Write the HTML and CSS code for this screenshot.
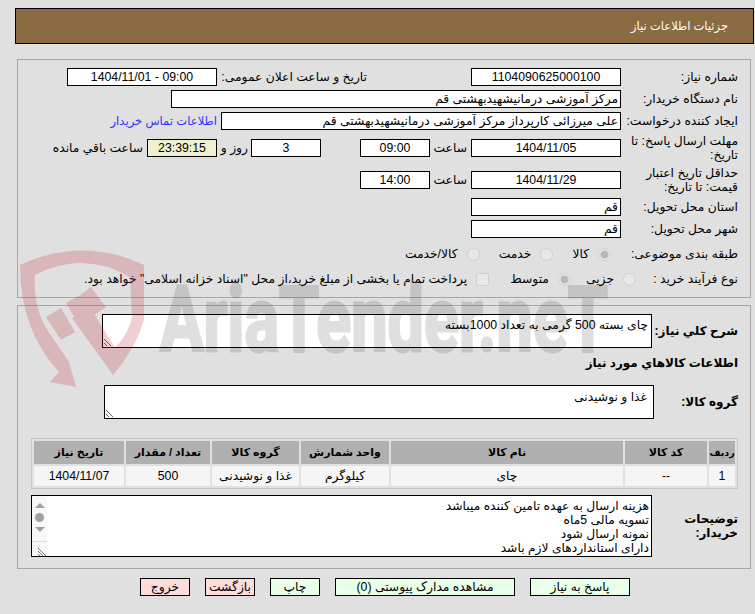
FILE: index.html
```html
<!DOCTYPE html>
<html lang="fa" dir="rtl">
<head>
    <meta charset="UTF-8">
    <meta name="viewport" content="width=device-width, initial-scale=1.0">
    <title>جزئیات اطلاعات نیاز</title>
    <link rel="stylesheet" href="styles.css">
</head>
<body>
    <!-- Page title -->
    <header class="title-bar">
        <h1 class="title-text">جزئیات اطلاعات نیاز</h1>
    </header>

    <!-- Tender details -->
    <section class="panel panel-top">
        <div class="row">
            <label class="row-label">شماره نیاز:</label>
            <input class="field field-md field-center" value="1104090625000100" readonly>
            <label class="announce-label">تاریخ و ساعت اعلان عمومی:</label>
            <input class="field field-md field-center" value="09:00 - 1404/11/01" readonly>
        </div>
        <div class="row">
            <label class="row-label">نام دستگاه خریدار:</label>
            <input class="field field-lg" value="مرکز آموزشی درمانیشهیدبهشتی قم" readonly>
        </div>
        <div class="row">
            <label class="row-label">ایجاد کننده درخواست:</label>
            <input class="field field-xl" value="علی میرزائی کارپرداز مرکز آموزشی درمانیشهیدبهشتی قم" readonly>
            <a class="contact-link" href="#">اطلاعات تماس خریدار</a>
        </div>
        <div class="row row-tall">
            <label class="row-label">مهلت ارسال پاسخ: تا تاریخ:</label>
            <input class="field field-md field-center" value="1404/11/05" readonly>
            <span class="time-label">ساعت</span>
            <input class="field field-sm field-center" value="09:00" readonly>
            <input class="field field-sm field-center days-field" value="3" readonly>
            <span class="days-label">روز و</span>
            <input class="field field-sm field-center timer-field" value="23:39:15" readonly>
            <span class="left-label">ساعت باقي مانده</span>
        </div>
        <div class="row row-tall">
            <label class="row-label">حداقل تاریخ اعتبار قیمت: تا تاریخ:</label>
            <input class="field field-md field-center" value="1404/11/29" readonly>
            <span class="time-label">ساعت</span>
            <input class="field field-sm field-center" value="14:00" readonly>
        </div>
        <div class="row">
            <label class="row-label">استان محل تحویل:</label>
            <input class="field field-md" value="قم" readonly>
        </div>
        <div class="row">
            <label class="row-label">شهر محل تحویل:</label>
            <input class="field field-md" value="قم" readonly>
        </div>
        <div class="row row-subject">
            <label class="row-label">طبقه بندی موضوعی:</label>
            <input class="radio subject-first" type="radio" name="subject" checked disabled>
            <span class="option-text subject-text">کالا</span>
            <input class="radio" type="radio" name="subject" disabled>
            <span class="option-text subject-text">خدمت</span>
            <input class="radio" type="radio" name="subject" disabled>
            <span class="option-text">کالا/خدمت</span>
        </div>
        <div class="row row-process">
            <label class="row-label">نوع فرآیند خرید :</label>
            <input class="radio process-first" type="radio" name="process" disabled>
            <span class="option-text">جزیی</span>
            <input class="radio" type="radio" name="process" checked disabled>
            <span class="option-text option-wide">متوسط</span>
            <input class="check" type="checkbox" disabled>
            <span class="option-text">پرداخت تمام یا بخشی از مبلغ خرید،از محل "اسناد خزانه اسلامی" خواهد بود.</span>
        </div>
    </section>

    <!-- Goods -->
    <section class="panel panel-bottom">
        <div class="row-desc">
            <label class="bold-label desc-label">شرح کلي نياز:</label>
            <textarea class="memo memo-desc" readonly>چای بسته 500 گرمی به تعداد 1000بسته</textarea>
        </div>
        <h2 class="bold-label goods-heading">اطلاعات كالاهاي مورد نياز</h2>
        <div class="row-desc row-group">
            <label class="bold-label group-label">گروه کالا:</label>
            <textarea class="memo memo-group" readonly>غذا و نوشیدنی</textarea>
        </div>

        <table class="goods-table">
            <thead>
                <tr>
                    <th class="col-index">ردیف</th>
                    <th class="col-code">کد کالا</th>
                    <th class="col-name">نام کالا</th>
                    <th class="col-unit">واحد شمارش</th>
                    <th class="col-group">گروه کالا</th>
                    <th class="col-count">تعداد / مقدار</th>
                    <th class="col-date">تاریخ نیاز</th>
                </tr>
            </thead>
            <tbody>
                <tr>
                    <td>1</td>
                    <td>--</td>
                    <td>چای</td>
                    <td>کیلوگرم</td>
                    <td>غذا و نوشیدنی</td>
                    <td>500</td>
                    <td>1404/11/07</td>
                </tr>
            </tbody>
        </table>

        <div class="row-notes">
            <label class="bold-label notes-label">توضیحات خریدار:</label>
            <div class="notes-box">
                <div class="notes-text">
                    هزینه ارسال به عهده تامین کننده میباشد<br>
                    تسویه مالی 5ماه<br>
                    نمونه ارسال شود<br>
                    دارای استانداردهای لازم باشد
                </div>
                <div class="notes-scroll">
                    <span class="arrow-up"></span>
                    <span class="scroll-thumb"></span>
                    <span class="arrow-down"></span>
                    <span class="scroll-grip">
                        <svg width="10" height="10" viewBox="0 0 10 10">
                            <path d="M1 1l8 8M1 4l5 5M1 7l2 2" stroke="#777" fill="none"/>
                        </svg>
                    </span>
                </div>
            </div>
        </div>
    </section>

    <!-- Actions -->
    <div class="actions">
        <button class="btn btn-green btn-reply">پاسخ به نیاز</button>
        <button class="btn btn-green btn-docs">مشاهده مدارک پیوستی (0)</button>
        <button class="btn btn-green">چاپ</button>
        <button class="btn btn-red">بازگشت</button>
        <button class="btn btn-red">خروج</button>
    </div>

    <!-- Watermark, lies over the whole page -->
    <svg class="watermark" width="755" height="614" viewBox="0 0 755 614">
        <path class="watermark-shield" d="M20 265Q83 236 144 265L144 320Q136 348 113 375L72 318L90 307L115 348Q130 332 132 316L130 277Q83 250 35 275Q33 308 48 331L69 362L76 387L50 382L59 372Q20 330 20 265Z
            M46 317L61 308L75 332L61 340Z
            M66 303L78 296L92 316L80 326Z
            M78 297L91 287L106 307L90 318Z"/>
        <text class="watermark-text" x="160" y="351" textLength="448" lengthAdjust="spacingAndGlyphs">AriaTender.neT</text>
    </svg>
</body>
</html>
```

FILE: styles.css
```css
* {
    box-sizing: border-box;
}

body {
    margin: 0;
    width: 755px;
    height: 614px;
    position: relative;
    overflow: hidden;
    background-color: #e0e0e0;
    color: #000;
    font-family: "Liberation Sans", "DejaVu Sans", sans-serif;
    font-size: 12.3px;
}

.title-bar {
    height: 36px;
    margin: 8px 1px 0 15px;
    padding-right: 25px;
    display: flex;
    align-items: center;
    border: 1px solid #000;
    background-color: #8b6b41;
}

.title-text {
    margin: 0;
    color: #fff;
    font-size: 11.5px;
    font-weight: normal;
}

.panel {
    margin: 0 4px 0 17px;
    border: 1px solid #a8a8a8;
}

.panel-top {
    height: 239px;
    margin-top: 15px;
    padding: 8px 12px 0 0;
}

.panel-bottom {
    height: 264px;
    margin-top: 7px;
    padding: 8px 12px 0 0;
}

/* form rows */
.row {
    height: 18px;
    margin-bottom: 4px;
    display: flex;
    align-items: center;
}

.row-tall {
    height: 28px;
}

.row-subject {
    margin-top: 7px;
    margin-bottom: 7px;
}

.row-label {
    width: 117px;
    flex-shrink: 0;
    line-height: 14px;
}

.field {
    height: 18px;
    padding: 0 2px;
    border: 1px solid #000;
    border-radius: 0;
    outline: none;
    background-color: #fff;
    color: #000;
    font-family: inherit;
    font-size: 12.3px;
}

.field-sm {
    width: 70px;
}

.field-md {
    width: 150px;
}

.field-lg {
    width: 450px;
}

.field-xl {
    width: 400px;
}

.field-center {
    text-align: center;
}

.announce-label {
    width: 145px;
    margin-right: 104px;
    margin-left: 5px;
    flex-shrink: 0;
    white-space: nowrap;
}

.contact-link {
    margin-right: 4px;
    color: #3333ff;
    font-size: 11.6px;
    text-decoration: none;
    white-space: nowrap;
}

.time-label {
    width: 34px;
    margin: 0 4px 0 3px;
}

.days-field {
    margin-right: 39px;
}

.days-label {
    width: 26px;
    margin: 0 3px 0 5px;
    white-space: nowrap;
}

.timer-field {
    background-color: #f0f0d0;
}

.left-label {
    margin-right: 4px;
    white-space: nowrap;
}

/* radios and checkbox */
.radio,
.check {
    appearance: none;
    width: 13px;
    height: 13px;
    margin: 0;
    flex-shrink: 0;
    border: 1px solid #d0d0d0;
    background-color: #e8e8e8;
}

.radio {
    border-radius: 50%;
}

.radio:checked {
    background: radial-gradient(circle, #b8b8b8 0, #b8b8b8 3.5px, #e8e8e8 4.5px);
}

.check {
    border-radius: 2px;
}

.option-text {
    margin: 0 9px 0 15px;
    white-space: nowrap;
}

.subject-text {
    margin-left: 19px;
}

.option-wide {
    margin-left: 21px;
}

.subject-first {
    margin-right: 10px;
}

.process-first {
    margin-right: -15px;
}

/* goods section */
.bold-label {
    margin: 0;
    font-size: 12px;
    font-weight: bold;
}

.row-desc {
    display: flex;
    align-items: center;
}

.desc-label {
    width: 86px;
    flex-shrink: 0;
}

.group-label {
    width: 84px;
    flex-shrink: 0;
}

.memo {
    display: block;
    padding: 3px 3px;
    border: 1px solid #000;
    border-radius: 0;
    outline: none;
    background-color: #fff;
    font-family: inherit;
    font-size: 12.3px;
    line-height: 14px;
    overflow: hidden;
}

.memo-desc,
.memo-group {
    width: 550px;
    height: 34px;
}

.memo-group {
    padding: 4px 6px 0 0;
}

.goods-heading {
    margin-top: 8px;
    height: 14px;
    line-height: 14px;
}

.row-group {
    margin-top: 15px;
}

.goods-table {
    width: 707px;
    height: 50px;
    margin-top: 19px;
    border: 1px solid #c8c8c8;
    border-spacing: 2px;
    table-layout: fixed;
}

.goods-table th {
    padding: 0;
    height: 23px;
    background-color: #b0b0b0;
    font-size: 11px;
}

.goods-table td {
    padding: 0;
    height: 20px;
    background-color: #f5f5f5;
    text-align: center;
}

.goods-table .col-index {
    width: 26px;
    font-size: 9.5px;
}

.col-code {
    width: 82px;
}

.col-name {
    width: 232px;
}

.col-unit {
    width: 88px;
}

.col-group {
    width: 87px;
}

.col-count {
    width: 84px;
}

.row-notes {
    margin-top: 6px;
    display: flex;
    align-items: center;
}

.notes-label {
    width: 86px;
    line-height: 14px;
    flex-shrink: 0;
}

.notes-box {
    width: 621px;
    height: 62px;
    display: flex;
    border: 1px solid #000;
    background-color: #fff;
}

.notes-text {
    flex-grow: 1;
    padding: 3px 2px 0 0;
    line-height: 14px;
}

.notes-scroll {
    width: 15px;
    flex-shrink: 0;
    display: flex;
    flex-direction: column;
    align-items: center;
    background-color: #f8f8f8;
}

.arrow-up,
.arrow-down {
    width: 0;
    height: 0;
    border-left: 5px solid transparent;
    border-right: 5px solid transparent;
}

.arrow-up {
    margin-top: 7px;
    border-bottom: 5px solid #a0a0a0;
}

.arrow-down {
    margin-top: 5px;
    border-top: 5px solid #a0a0a0;
}

.scroll-thumb {
    width: 9px;
    height: 9px;
    margin-top: 5px;
    border-radius: 50%;
    background-color: #a0a0a0;
}

.scroll-grip {
    width: 100%;
    height: 15px;
    margin-top: auto;
    padding-top: 5px;
    border-top: 1px solid #ddd;
    line-height: 0;
}

/* actions */
.actions {
    margin-top: 9px;
    padding-right: 125px;
    display: flex;
    gap: 15px;
}

.btn {
    width: 50px;
    height: 18px;
    padding: 0;
    border: 1px solid #000;
    border-radius: 0;
    color: #000;
    font-family: inherit;
    font-size: 12.3px;
}

.btn-green {
    background-color: #e8ffe8;
}

.btn-red {
    background-color: #ffdcdc;
}

.btn-reply {
    width: 100px;
}

.btn-docs {
    width: 180px;
}

.watermark {
    position: absolute;
    top: 0;
    left: 0;
    pointer-events: none;
}

.watermark-shield {
    fill: #be1e2d;
    opacity: 0.22;
}

.watermark-text {
    direction: ltr;
    fill: #000;
    stroke: #000;
    stroke-width: 3px;
    opacity: 0.12;
    font-family: Roboto, sans-serif;
    font-size: 90px;
    font-weight: bold;
}
```
